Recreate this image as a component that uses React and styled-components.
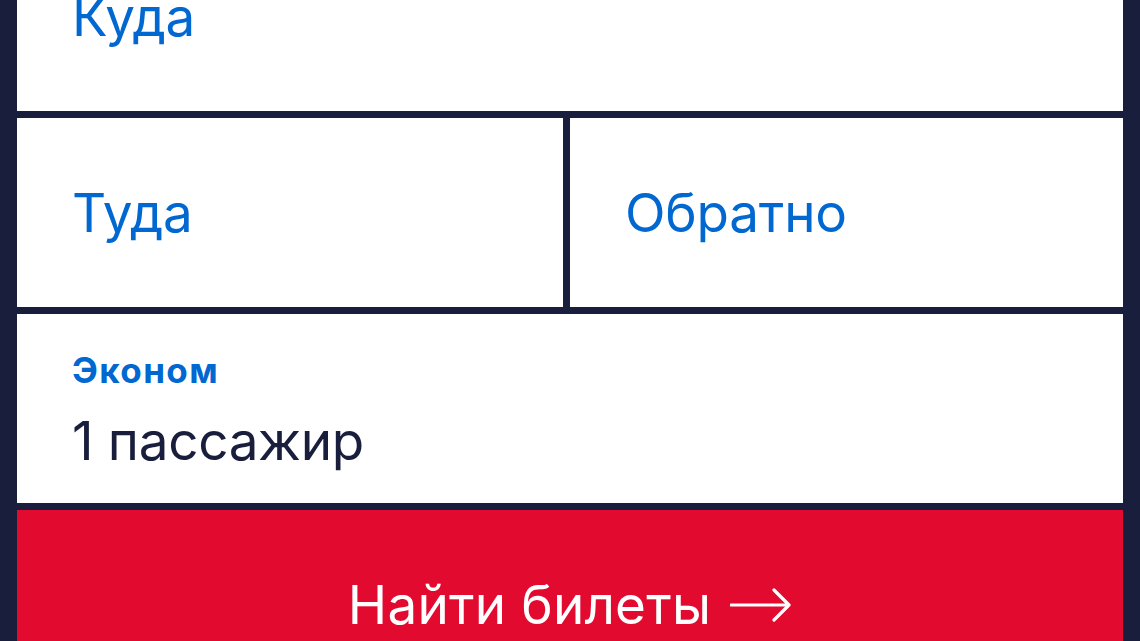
import React from 'react'
import styled, { createGlobalStyle } from 'styled-components'

const navy = '#1a1e3d'
const blue = '#0068d0'
const red = '#e30a2f'

const GlobalStyle = createGlobalStyle`
	html, body {
		margin: 0;
		padding: 0;
		background: ${navy};
		overflow: hidden;
	}

	body {
		font-family: Inter, 'Noto Sans', sans-serif;
		-webkit-font-smoothing: antialiased;
	}
`

const Page = styled.div`
	height: 641px;
	overflow: hidden;
	padding: 0 17px;
`

// the form is scrolled so the destination field sits partly above the top edge
const Form = styled.form`
	display: flex;
	flex-direction: column;
	gap: 7px;
	margin-top: -78px;
`

const Row = styled.div`
	display: grid;
	grid-template-columns: 546px 1fr;
	gap: 7px;
`

const Field = styled.div`
	background: #fff;
	height: 189px;
	box-sizing: border-box;
	padding: 0 56px 0 55px;
	display: flex;
	flex-direction: column;
	justify-content: center;
`

const Placeholder = styled.span`
	color: ${blue};
	font-size: 53px;
	font-weight: 400;
	line-height: 1;
	letter-spacing: -0.2px;
	margin-top: 2px;
`

const ClassLabel = styled.span`
	color: ${blue};
	font-size: 35px;
	font-weight: 700;
	line-height: 1;
	letter-spacing: 1.4px;
	margin-bottom: 27px;
	margin-top: 4px;
`

const Value = styled.span`
	color: ${navy};
	font-size: 53px;
	font-weight: 400;
	line-height: 1;
	letter-spacing: -0.3px;
`

const SearchButton = styled.button`
	border: none;
	background: ${red};
	color: #fff;
	height: 189px;
	display: flex;
	align-items: center;
	justify-content: center;
	gap: 19px;
	font-family: inherit;
	font-size: 53px;
	font-weight: 400;
	letter-spacing: 0.2px;
	cursor: pointer;
`

const Arrow = () => (
	<svg width="62" height="36" viewBox="0 0 62 36" fill="none">
		<path d="M1 18H59M44 3L59 18L44 33" stroke="#fff" strokeWidth="3.2" strokeLinecap="round" strokeLinejoin="round" />
	</svg>
)

const App = () => (
	<Page>
		<GlobalStyle />
		<Form onSubmit={e => e.preventDefault()}>
			<Field>
				<Placeholder>Куда</Placeholder>
			</Field>

			<Row>
				<Field>
					<Placeholder>Туда</Placeholder>
				</Field>
				<Field>
					<Placeholder>Обратно</Placeholder>
				</Field>
			</Row>

			<Field>
				<ClassLabel>Эконом</ClassLabel>
				<Value>1 пассажир</Value>
			</Field>

			<SearchButton type="submit">
				Найти билеты
				<Arrow />
			</SearchButton>
		</Form>
	</Page>
)

export default App
